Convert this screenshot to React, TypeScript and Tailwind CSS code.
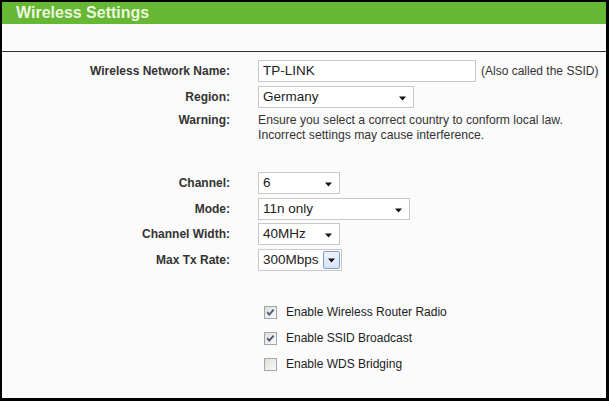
import React from "react";

const font = { fontFamily: '"Liberation Sans", Arial, sans-serif' };

function Arrow() {
  return (
    <svg width="8" height="5" viewBox="0 0 8 5" className="block">
      <path d="M0 0.5 H7 L3.5 4.5 Z" fill="#111" />
    </svg>
  );
}

function Select({ value, width, focused }: { value: string; width: string; focused?: boolean }) {
  return (
    <div className={`relative flex h-[22px] ${width} items-center border border-[#c8c8c8] bg-white`}>
      <span className="pl-[4px] text-[13.5px] leading-none text-[#222]">{value}</span>
      {focused ? (
        <div className="absolute right-[1px] top-[1px] flex h-[18px] w-[17px] items-center justify-center rounded-[2px] border border-[#7a9cd3] bg-gradient-to-b from-[#eef4fc] to-[#d6e3f7]">
          <Arrow />
        </div>
      ) : (
        <div className="absolute right-[6px] top-[9px]">
          <Arrow />
        </div>
      )}
    </div>
  );
}

function Checkbox({ checked }: { checked: boolean }) {
  return (
    <svg width="13" height="13" viewBox="0 0 13 13" className="block">
      <defs>
        <linearGradient id={checked ? "cbg1" : "cbg0"} x1="0" y1="0" x2="1" y2="1">
          <stop offset="0" stopColor="#dcdcd8" />
          <stop offset="1" stopColor="#fbfbf9" />
        </linearGradient>
      </defs>
      <rect x="0.5" y="0.5" width="12" height="12" fill={`url(#${checked ? "cbg1" : "cbg0"})`} stroke="#9ea6ae" />
      {checked && <path d="M3.2 6.2 L5.3 8.6 L9.6 3.6" fill="none" stroke="#4a5a78" strokeWidth="1.8" />}
    </svg>
  );
}

function Row({ label, children, h = "h-[26px]" }: { label: string; children: React.ReactNode; h?: string }) {
  return (
    <div className={`flex ${h} items-center`}>
      <div className="w-[228px] text-right text-[12px] font-bold text-[#333]">{label}</div>
      <div className="ml-[28px] flex items-center">{children}</div>
    </div>
  );
}

export default function App() {
  return (
    <div className="h-[401px] w-[609px] bg-black pl-[2px] pr-[3px] pt-[2px] pb-[3px]" style={font}>
      <div className="flex h-full flex-col bg-[#fbfbfb]">
        <div className="flex h-[22px] items-center bg-[#66b733] pl-[14px]">
          <span className="text-[16px] font-bold leading-none text-[#eaf6df]">Wireless Settings</span>
        </div>
        <div className="h-[27px]" />
        <div className="h-[1px] bg-[#26352a]" />
        <div className="pt-[6px]">
          <Row label="Wireless Network Name:">
            <div className="flex h-[22px] w-[218px] items-center border border-[#c8c8c8] bg-white pl-[4px] text-[13.5px] text-[#222]">TP-LINK</div>
            <span className="ml-[5px] text-[12px] text-[#333]">(Also called the SSID)</span>
          </Row>
          <Row label="Region:">
            <Select value="Germany" width="w-[156px]" />
          </Row>
          <div className="mt-[3px] flex">
            <div className="w-[228px] text-right text-[12px] font-bold leading-[15px] text-[#333]">Warning:</div>
            <div className="ml-[28px] text-[12.2px] leading-[15px] text-[#333]">
              Ensure you select a correct country to conform local law.
              <br />
              Incorrect settings may cause interference.
            </div>
          </div>
          <div className="h-[27px]" />
          <Row label="Channel:">
            <Select value="6" width="w-[82px]" />
          </Row>
          <Row label="Mode:" h="h-[25px]">
            <Select value="11n only" width="w-[152px]" />
          </Row>
          <Row label="Channel Width:" h="h-[26px]">
            <Select value="40MHz" width="w-[82px]" />
          </Row>
          <Row label="Max Tx Rate:">
            <Select value="300Mbps" width="w-[84px]" focused />
          </Row>
          <div className="h-[26px]" />
          {[
            ["Enable Wireless Router Radio", true],
            ["Enable SSID Broadcast", true],
            ["Enable WDS Bridging", false],
          ].map(([t, c]) => (
            <div key={t as string} className="flex h-[26px] items-center pl-[262px]">
              <Checkbox checked={c as boolean} />
              <span className="ml-[9px] text-[12px] text-[#222]">{t as string}</span>
            </div>
          ))}
        </div>
      </div>
    </div>
  );
}
